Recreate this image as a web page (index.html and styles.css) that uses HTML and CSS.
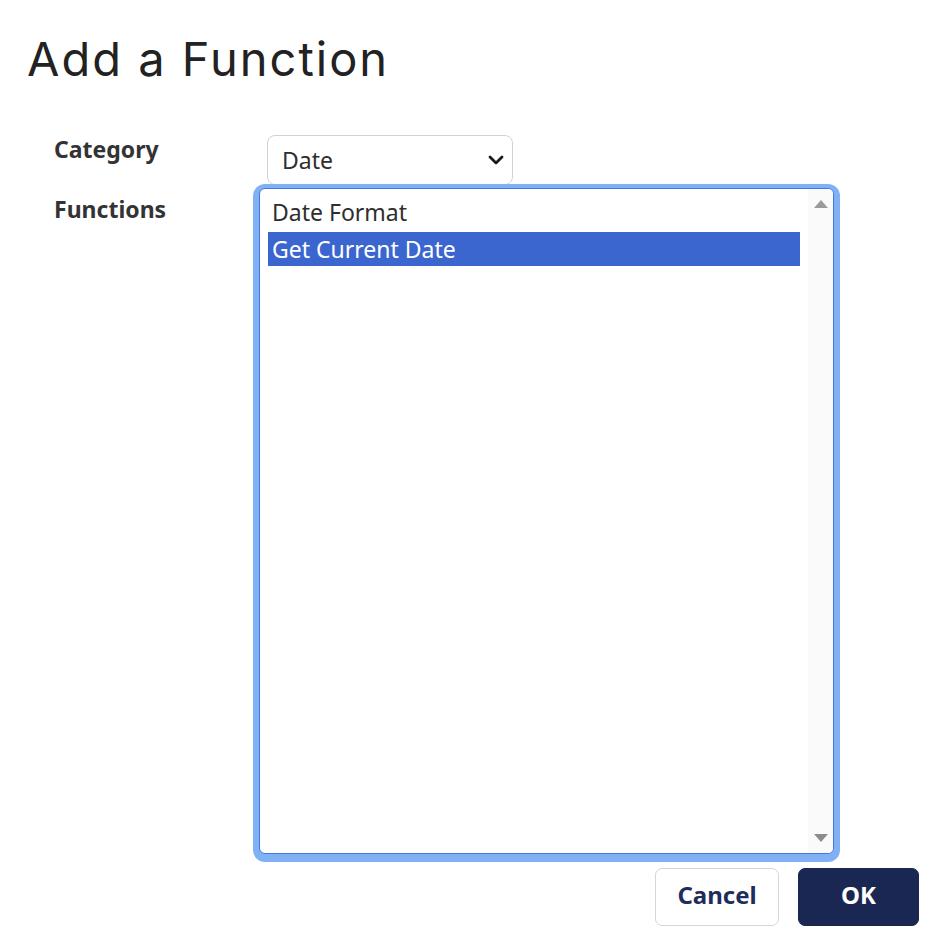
FILE: index.html
```html
<!DOCTYPE html>
<html lang="en">
<head>
<meta charset="utf-8">
<title>Add a Function</title>
<link rel="stylesheet" href="styles.css">
</head>
<body>
<div class="dialog">
  <h1 class="title">Add a Function</h1>
  <div class="form">
    <div class="label">Category</div>
    <div class="control">
      <div class="select">
        <span class="select-value">Date</span>
        <svg class="chevron" width="16" height="10" viewBox="0 0 16 10"><polyline points="2,2 8,8 14,2" fill="none" stroke="#1a1a1a" stroke-width="2.8" stroke-linecap="round" stroke-linejoin="round"/></svg>
      </div>
    </div>
    <div class="label label-functions">Functions</div>
    <div class="control">
      <div class="listbox">
        <div class="options">
          <div class="option">Date Format</div>
          <div class="option selected">Get Current Date</div>
        </div>
        <div class="scrollbar">
          <svg class="arrow" width="14" height="8" viewBox="0 0 14 8"><polygon points="7,0 14,8 0,8" fill="#9a9a9a"/></svg>
          <svg class="arrow" width="14" height="8" viewBox="0 0 14 8"><polygon points="0,0 14,0 7,8" fill="#8c8c8c"/></svg>
        </div>
      </div>
    </div>
  </div>
  <div class="actions">
    <button class="btn btn-cancel" type="button">Cancel</button>
    <button class="btn btn-ok" type="button">OK</button>
  </div>
</div>
</body>
</html>
```
FILE: styles.css
```css
html, body {
  margin: 0;
  padding: 0;
  background: #ffffff;
}
body {
  font-family: "Noto Sans", "Open Sans", sans-serif;
  color: #2b2b2b;
}
.dialog {
  width: 936px;
  height: 948px;
  overflow: hidden;
}
.title {
  margin: 35px 0 0 27px;
  font-family: Inter, "Noto Sans", sans-serif;
  font-weight: 400;
  font-size: 47px;
  line-height: 48px;
  letter-spacing: 2px;
  color: #222222;
}
.form {
  display: grid;
  grid-template-columns: 205px 1fr;
  row-gap: 3px;
  margin-top: 52px;
  padding-left: 54px;
}
.label {
  font-size: 23px;
  line-height: 28px;
  font-weight: 700;
  color: #333333;
}
.label-functions {
  padding-top: 7px;
}
.control {
  display: flex;
}
.select {
  box-sizing: border-box;
  margin-left: 8px;
  width: 246px;
  height: 50px;
  border: 1px solid #d2d2d2;
  border-radius: 8px;
  display: flex;
  align-items: center;
  justify-content: space-between;
  padding: 0 8px 0 14px;
  font-size: 23px;
  line-height: 30px;
  color: #2e2e2e;
}
.chevron {
  display: block;
}
.listbox {
  box-sizing: border-box;
  width: 575px;
  height: 666px;
  border: 1px solid #4677dc;
  border-radius: 6px;
  box-shadow: 0 2px 0 6px #80b1f4;
  background: #ffffff;
  display: flex;
  overflow: hidden;
}
.options {
  flex: 1;
  padding: 9px 8px 0 8px;
}
.option {
  height: 34px;
  line-height: 34px;
  padding-left: 4px;
  font-size: 23px;
  color: #2e2e2e;
  white-space: nowrap;
}
.option:first-child {
  line-height: 29px;
}
.option.selected {
  background: #3b66cf;
  color: #ffffff;
}
.scrollbar {
  width: 25px;
  background: #fafafa;
  display: flex;
  flex-direction: column;
  justify-content: space-between;
  align-items: center;
  padding: 11px 0 11px;
}
.arrow {
  display: block;
}
.actions {
  display: flex;
  justify-content: flex-end;
  gap: 19px;
  margin-top: 14px;
  padding-right: 17px;
}
.btn {
  box-sizing: border-box;
  height: 58px;
  border-radius: 7px;
  font-family: "Noto Sans", "Open Sans", sans-serif;
  font-size: 24px;
  font-weight: 700;
  line-height: 30px;
  padding: 0 0 4px;
  cursor: pointer;
}
.btn-cancel {
  width: 124px;
  background: #ffffff;
  border: 1px solid #d6d6d6;
  color: #1f2d5a;
}
.btn-ok {
  width: 121px;
  background: #1a2752;
  border: 1px solid #1a2752;
  color: #ffffff;
}
```
